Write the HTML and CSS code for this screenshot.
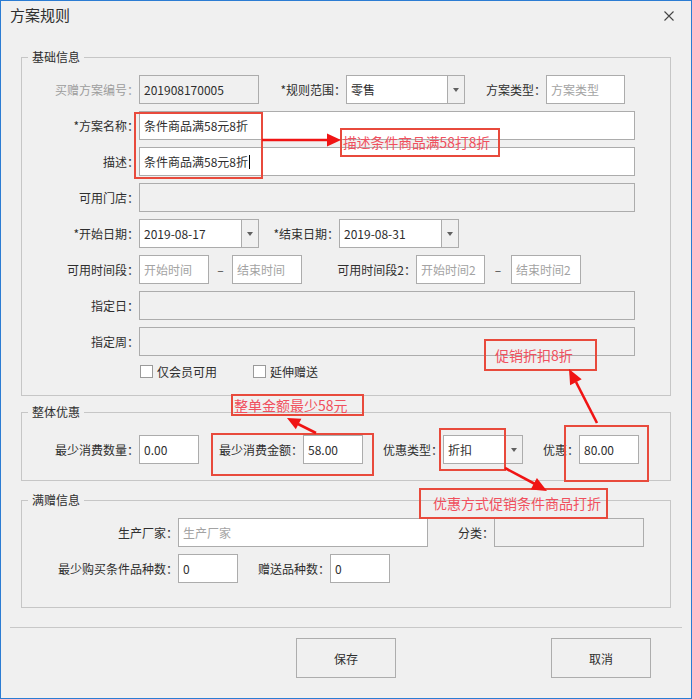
FILE: index.html
```html
<!DOCTYPE html>
<html lang="zh-CN">
<head>
    <meta charset="UTF-8">
    <title>方案规则</title>
    <link rel="stylesheet" href="styles.css">
</head>
<body>
<div class="window">
    <div class="titlebar">
        <span class="title">方案规则</span>
        <svg class="close" width="10" height="10" viewBox="0 0 10 10"><path d="M0.5 0.5L9.5 9.5M9.5 0.5L0.5 9.5" stroke="#444" stroke-width="1.1" fill="none"/></svg>
    </div>

    <div class="content">
        <!-- 基础信息 -->
        <fieldset class="group group-base">
            <legend>基础信息</legend>
            <div class="rows">
                <div class="row">
                    <label class="lbl lbl-main muted">买赠方案编号：</label>
                    <input class="w120 ro" value="201908170005" readonly>
                    <label class="lbl w87">*规则范围：</label>
                    <div class="combo w119"><span class="combo-text">零售</span><span class="combo-btn"></span></div>
                    <label class="lbl w81">方案类型：</label>
                    <input class="w79" placeholder="方案类型">
                </div>
                <div class="row">
                    <label class="lbl lbl-main">*方案名称：</label>
                    <input class="w496" value="条件商品满58元8折">
                </div>
                <div class="row">
                    <label class="lbl lbl-main">描述：</label>
                    <div class="textbox w496">条件商品满58元8折<span class="caret"></span></div>
                </div>
                <div class="row">
                    <label class="lbl lbl-main">可用门店：</label>
                    <input class="w496" disabled>
                </div>
                <div class="row">
                    <label class="lbl lbl-main">*开始日期：</label>
                    <div class="combo w120"><span class="combo-text">2019-08-17</span><span class="combo-btn"></span></div>
                    <label class="lbl w80">*结束日期：</label>
                    <div class="combo w120"><span class="combo-text">2019-08-31</span><span class="combo-btn"></span></div>
                </div>
                <div class="row">
                    <label class="lbl lbl-main">可用时间段：</label>
                    <input class="w70" placeholder="开始时间">
                    <span class="dash w23">–</span>
                    <input class="w70" placeholder="结束时间">
                    <label class="lbl w114">可用时间段2：</label>
                    <input class="w69" placeholder="开始时间2">
                    <span class="dash w26">–</span>
                    <input class="w70" placeholder="结束时间2">
                </div>
                <div class="row">
                    <label class="lbl lbl-main">指定日：</label>
                    <input class="w496" disabled>
                </div>
                <div class="row">
                    <label class="lbl lbl-main">指定周：</label>
                    <input class="w496" disabled>
                </div>
                <div class="checks">
                    <label class="check"><span class="box"></span>仅会员可用</label>
                    <label class="check"><span class="box"></span>延伸赠送</label>
                </div>
            </div>
        </fieldset>

        <!-- 整体优惠 -->
        <fieldset class="group group-offer">
            <legend>整体优惠</legend>
            <div class="row">
                <label class="lbl lbl-main">最少消费数量：</label>
                <input class="w60" value="0.00">
                <label class="lbl w104">最少消费金额：</label>
                <input class="w60" value="58.00">
                <label class="lbl w80">优惠类型：</label>
                <div class="combo w80"><span class="combo-text">折扣</span><span class="combo-btn"></span></div>
                <label class="lbl w56">优惠：</label>
                <input class="w60" value="80.00">
            </div>
        </fieldset>

        <!-- 满赠信息 -->
        <fieldset class="group group-gift">
            <legend>满赠信息</legend>
            <div class="rows">
                <div class="row">
                    <label class="lbl lbl-main">生产厂家：</label>
                    <input class="w250" placeholder="生产厂家">
                    <label class="lbl w66">分类：</label>
                    <input class="w150" disabled>
                </div>
                <div class="row">
                    <label class="lbl lbl-main">最少购买条件品种数：</label>
                    <input class="w60" value="0">
                    <label class="lbl w92">赠送品种数：</label>
                    <input class="w60" value="0">
                </div>
            </div>
        </fieldset>
    </div>

    <div class="divider"></div>
    <div class="actions">
        <button class="btn">保存</button>
        <button class="btn">取消</button>
    </div>

    <!-- annotations -->
    <div class="mark mark-name"></div>
    <div class="note note-desc">描述条件商品满58打8折</div>
    <div class="mark mark-amount"></div>
    <div class="note note-amount">整单金额最少58元</div>
    <div class="mark mark-type"></div>
    <div class="mark mark-value"></div>
    <div class="note note-rate">促销折扣8折</div>
    <div class="note note-type">优惠方式促销条件商品打折</div>

    <svg class="arrows" width="692" height="699" viewBox="0 0 692 699">
        <g stroke="#f01414" stroke-width="2.6" fill="#f01414">
            <line x1="262" y1="140" x2="329" y2="140"/>
            <polygon stroke="none" points="341,140 327,133.5 327,146.5"/>
            <line x1="316" y1="433" x2="298" y2="424"/>
            <polygon stroke="none" points="287,418 301.4,418.7 295.8,429.3"/>
            <line x1="597" y1="423" x2="576" y2="382"/>
            <polygon stroke="none" points="569,369 581.7,379.3 570.1,385.3"/>
            <line x1="505" y1="468" x2="535" y2="484"/>
            <polygon stroke="none" points="547,491 530.7,489.5 536.9,478.1"/>
        </g>
    </svg>
</div>
</body>
</html>
```

FILE: styles.css
```css
/* Basic styling */
* {
    box-sizing: border-box;
}
body {
    margin: 0;
    background: #fff;
    font-family: "Noto Sans CJK SC", "Microsoft YaHei", sans-serif;
    font-size: 12px;
    color: #2e2e2e;
}
.window {
    position: relative;
    width: 692px;
    height: 699px;
    border: 1px solid #2b7cd3;
    background: #f0f0f0;
    overflow: hidden;
}

/* Title bar */
.titlebar {
    display: flex;
    justify-content: space-between;
    align-items: flex-start;
    height: 30px;
    padding: 4px 17px 0 9px;
}
.title {
    font-size: 15px;
    line-height: 20px;
}
.close {
    margin-top: 6px;
}

/* Group boxes */
.content {
    padding: 0 20px;
}
.group {
    margin: 0;
    padding: 0;
    min-width: 0;
    border: 1px solid #c6c6c6;
}
.group legend {
    margin-left: 6px;
    padding: 0 4px;
    font-size: 12px;
    line-height: 14px;
}
.group-base {
    margin-top: 19px;
    padding: 11px 0 15px;
}
.group-offer {
    margin-top: 9px;
    padding: 16px 0 16px;
}
.group-gift {
    margin-top: 12px;
    padding: 11px 0 24px;
}
.rows {
    display: flex;
    flex-direction: column;
    gap: 7px;
}
.row {
    display: flex;
    align-items: center;
    height: 29px;
}
.row > * {
    flex: none;
}
.lbl {
    text-align: right;
    white-space: nowrap;
    line-height: 16px;
}
.lbl.muted {
    color: #9d9d9d;
}
.lbl-main {
    width: 117px;
}
.group-gift .lbl-main {
    width: 156px;
}
.dash {
    text-align: center;
    color: #444;
}

/* widths */
.w23 { width: 23px; }
.w26 { width: 26px; }
.w56 { width: 56px; }
.w60 { width: 60px; }
.w66 { width: 66px; }
.w69 { width: 69px; }
.w70 { width: 70px; }
.w79 { width: 79px; }
.w80 { width: 80px; }
.w81 { width: 81px; }
.w87 { width: 87px; }
.w92 { width: 92px; }
.w104 { width: 104px; }
.w114 { width: 114px; }
.w119 { width: 119px; }
.w120 { width: 120px; }
.w150 { width: 150px; }
.w250 { width: 250px; }
.w496 { width: 496px; }

/* Fields */
input,
.textbox {
    height: 29px;
    margin: 0;
    padding: 0 4px;
    border: 1px solid #acacac;
    background: #fff;
    font: inherit;
    color: #2e2e2e;
    outline: none;
}
input::placeholder {
    color: #a3a3a3;
}
input.ro,
input:disabled {
    background: #f0f0f0;
}
.textbox {
    display: flex;
    align-items: center;
}
.caret {
    display: inline-block;
    width: 1px;
    height: 14px;
    margin-left: 1px;
    background: #000;
}
.combo {
    display: flex;
    height: 29px;
    border: 1px solid #acacac;
    background: #fff;
}
.combo-text {
    flex: 1;
    padding-left: 4px;
    line-height: 27px;
}
.combo-btn {
    position: relative;
    width: 17px;
    border-left: 1px solid #acacac;
    background: #f0f0f0;
}
.combo-btn::after {
    content: "";
    position: absolute;
    left: 4.5px;
    top: 12px;
    border-left: 3.5px solid transparent;
    border-right: 3.5px solid transparent;
    border-top: 4px solid #606060;
}

/* Checkboxes */
.checks {
    display: flex;
    align-items: center;
    height: 17px;
    padding-left: 118px;
}
.check {
    display: flex;
    align-items: center;
    gap: 4px;
    width: 113px;
    line-height: 16px;
}
.box {
    width: 13px;
    height: 13px;
    border: 1px solid #9a9a9a;
    background: #fff;
}

/* Bottom buttons */
.divider {
    height: 1px;
    margin: 19px 9px 0;
    background: #c8c8c8;
}
.actions {
    display: flex;
    gap: 155px;
    padding: 10px 0 0 295px;
}
.btn {
    width: 100px;
    height: 40px;
    border: 1px solid #adadad;
    background: #f0f0f0;
    font: inherit;
    color: #2e2e2e;
}

/* Red annotations */
.mark,
.note {
    position: absolute;
    border: 2px solid #e84a3c;
}
.note {
    color: #f0505e;
    font-size: 14px;
    white-space: nowrap;
}
.mark-name { left: 133px; top: 111px; width: 129px; height: 67px; }
.mark-amount { left: 210px; top: 432px; width: 163px; height: 43px; }
.mark-type { left: 438px; top: 427px; width: 67px; height: 43px; }
.mark-value { left: 563px; top: 424px; width: 85px; height: 57px; }
.note-desc {
    left: 339px; top: 127px; width: 160px; height: 29px;
    padding-left: 1px;
    font-size: 13.8px;
    line-height: 25px;
}
.note-amount {
    left: 230px; top: 393px; width: 133px; height: 22px;
    padding-left: 1px;
    line-height: 18px;
}
.note-rate {
    left: 483px; top: 338px; width: 113px; height: 32px;
    padding-left: 9px;
    line-height: 28px;
}
.note-type {
    left: 418px; top: 487px; width: 189px; height: 31px;
    padding-left: 12px;
    line-height: 27px;
}
.arrows {
    position: absolute;
    left: -1px;
    top: -1px;
    pointer-events: none;
}
```
